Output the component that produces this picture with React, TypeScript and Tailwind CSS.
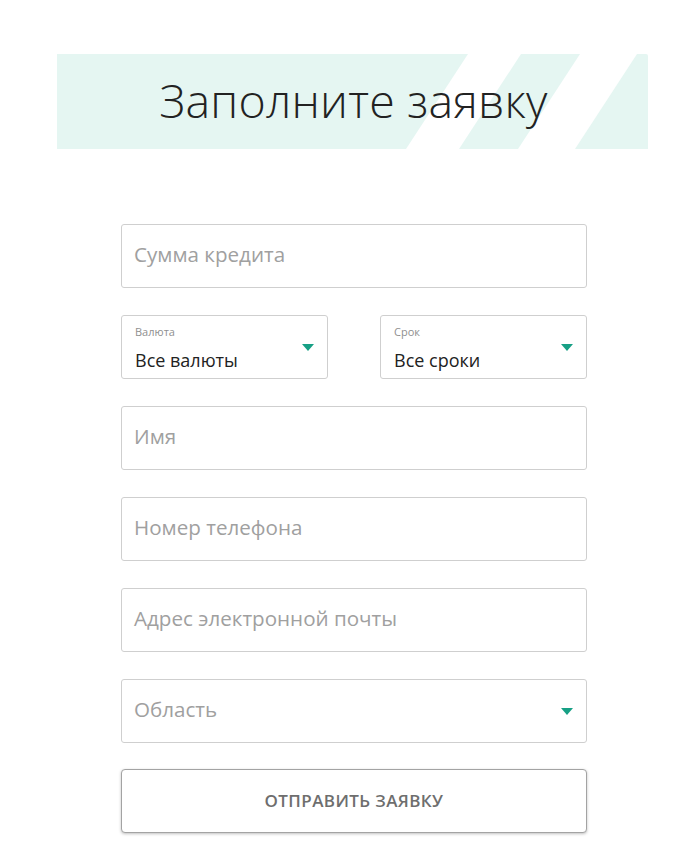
import React from 'react';

const FONT = { fontFamily: '"Open Sans", "Noto Sans", sans-serif' };

function Arrow() {
  return (
    <svg width="12" height="7" viewBox="0 0 12 7" className="shrink-0">
      <path d="M0 0H12L6 7Z" fill="#17a085" />
    </svg>
  );
}

function TextField({ placeholder }: { placeholder: string }) {
  return (
    <div className="h-16 rounded-[3px] border border-[#cfcfcf] bg-white flex items-center pl-[12px] pr-4 pb-[3px]">
      <span className="text-[20.6px] text-[#a0a0a0] leading-none">{placeholder}</span>
    </div>
  );
}

function SelectField({ label, value }: { label: string; value: string }) {
  return (
    <div className="h-16 rounded-[3px] border border-[#cfcfcf] bg-white flex items-center justify-between pl-[13px] pr-[13px]">
      <div className="flex flex-col pt-[1px]">
        <span className="text-[11px] text-[#8f8f8f] leading-none">{label}</span>
        <span className="text-[18px] text-[#222] leading-none mt-[14px]">{value}</span>
      </div>
      <Arrow />
    </div>
  );
}

export default function App() {
  return (
    <div className="w-[700px] h-[867px] bg-white" style={FONT}>
      <div className="pt-[54px] px-[57px] w-[705px]">
        {/* Banner */}
        <div className="relative h-[95px] w-[591px] flex items-center justify-center">
          <svg className="absolute inset-0" width="591" height="95" viewBox="0 0 591 95">
            <path d="M0 0H411L349 95H0Z" fill="#e5f6f2" />
            <path d="M464 0H523L461 95H402Z" fill="#e5f6f2" />
            <path d="M580 0H589Q591 0 591 2V95H518Z" fill="#e5f6f2" />
          </svg>
          <h1 className="relative text-[46.5px] font-light text-[#222] tracking-[0.2px] leading-none pb-[2px] pl-[2px]">
            Заполните заявку
          </h1>
        </div>
      </div>

      {/* Form */}
      <div className="mt-[75px] ml-[121px] w-[466px] flex flex-col gap-[27px]">
        <TextField placeholder="Сумма кредита" />
        <div className="flex justify-between">
          <div className="w-[207px]">
            <SelectField label="Валюта" value="Все валюты" />
          </div>
          <div className="w-[207px]">
            <SelectField label="Срок" value="Все сроки" />
          </div>
        </div>
        <TextField placeholder="Имя" />
        <TextField placeholder="Номер телефона" />
        <TextField placeholder="Адрес электронной почты" />
        <div className="h-16 rounded-[3px] border border-[#cfcfcf] bg-white flex items-center justify-between pl-[12px] pr-[13px]">
          <span className="text-[20.6px] text-[#a0a0a0] leading-none pb-[3px]">Область</span>
          <Arrow />
        </div>
        <button className="h-16 -mt-[1px] rounded-[4px] border border-[#a3a3a3] bg-white shadow-[0_1px_3px_rgba(0,0,0,0.25)] text-[17px] font-semibold text-[#6e6e6e] tracking-[0.4px]">
          ОТПРАВИТЬ ЗАЯВКУ
        </button>
      </div>
    </div>
  );
}
